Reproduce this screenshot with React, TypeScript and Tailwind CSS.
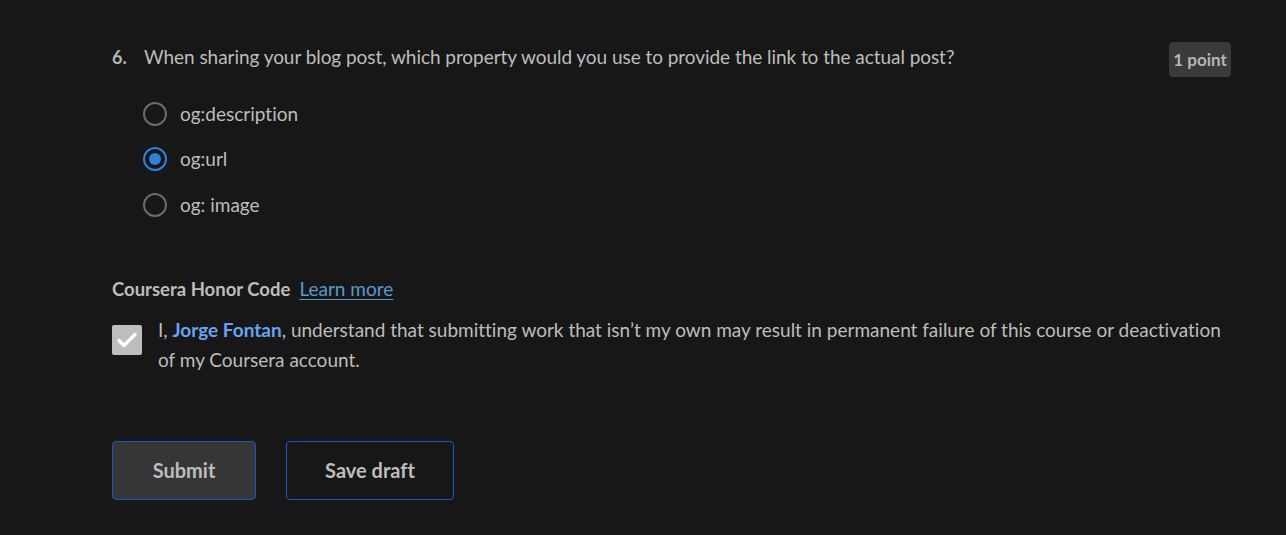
import React from "react";

const font = { fontFamily: "Lato, 'Noto Sans', sans-serif" };

function Radio({ checked, label }: { checked?: boolean; label: string }) {
  return (
    <div className="flex items-center h-[45.5px]">
      <span
        className={
          "w-[24px] h-[24px] rounded-full border-2 flex items-center justify-center " +
          (checked ? "border-[#2f7fdc]" : "border-[#6b6b6b]")
        }
      >
        {checked && <span className="w-[12px] h-[12px] rounded-full bg-[#2f7fdc]" />}
      </span>
      <span className="ml-[13px] text-[19px] text-[#bdbdbd]">{label}</span>
    </div>
  );
}

export default function App() {
  return (
    <div className="w-[1286px] h-[535px] bg-[#171717] overflow-hidden [font-variant-ligatures:none]" style={font}>
      <div className="pl-[112px] pr-[55px] pt-[42px]">
        <div className="flex items-start">
          <div className="flex flex-1 pt-[2px]">
            <span className="w-[32px] text-[18px] font-bold text-[#b5b5b5] leading-[26px]">6.</span>
            <span className="text-[19px] text-[#bdbdbd] leading-[26px] tracking-[-0.05px]">
              When sharing your blog post, which property would you use to provide the link to the actual post?
            </span>
          </div>
          <div className="h-[35px] w-[62px] rounded-[4px] bg-[#3a3a3a] flex items-center justify-center text-[17px] font-bold text-[#b5b5b5]">
            1 point
          </div>
        </div>
        <div className="pl-[31px] mt-[14px] flex flex-col">
          <Radio label="og:description" />
          <Radio checked label="og:url" />
          <Radio label="og: image" />
        </div>
        <div className="mt-[50px] flex items-center h-[24px]">
          <span className="text-[18.5px] font-bold text-[#bdbdbd]">Coursera Honor Code</span>
          <span className="ml-[9px] text-[19px] text-[#5c97d0] underline underline-offset-[3px]">Learn more</span>
        </div>
        <div className="mt-[13px] flex items-start">
          <span className="mt-[10px] w-[30px] h-[30px] rounded-[2px] bg-[#bdbdbd] flex items-center justify-center shrink-0">
            <svg width="26" height="26" viewBox="0 0 26 26" fill="none">
              <path d="M5 13.5l5 5L21 7.5" stroke="#ffffff" strokeWidth="3.4" strokeLinecap="round" strokeLinejoin="round" />
            </svg>
          </span>
          <p className="ml-[16px] text-[19px] leading-[30px] text-[#bdbdbd]">
            I, <span className="font-bold text-[#6aa2f5]">Jorge Fontan</span>, understand that submitting work that isn’t my own may result in permanent failure of this course or deactivation of my Coursera account.
          </p>
        </div>
        <div className="mt-[66px] flex gap-[30px]">
          <button className="w-[144px] h-[59px] rounded-[4px] border border-[#0f5bcc] bg-[#363636] text-[20px] font-bold text-[#bdbdbd]">
            Submit
          </button>
          <button className="w-[168px] h-[59px] rounded-[4px] border border-[#0f5bcc] bg-transparent text-[20px] font-bold text-[#bdbdbd]">
            Save draft
          </button>
        </div>
      </div>
    </div>
  );
}
